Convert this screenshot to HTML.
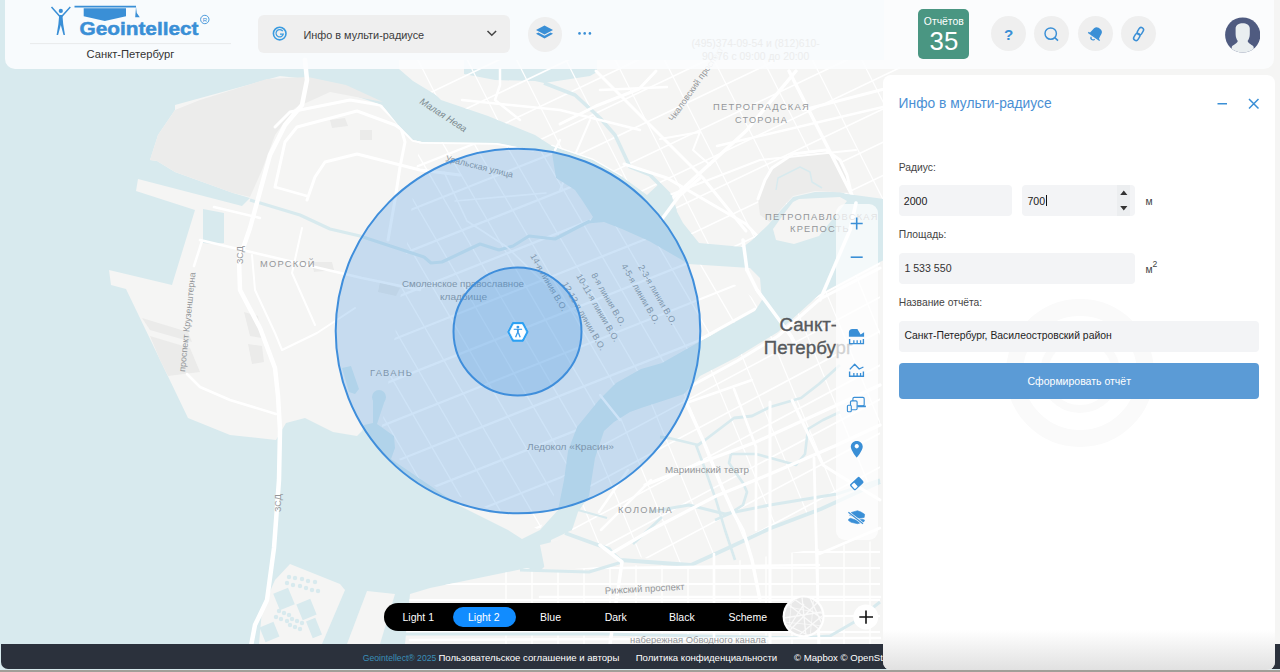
<!DOCTYPE html>
<html><head><meta charset="utf-8">
<style>
html,body{margin:0;padding:0;width:1280px;height:672px;overflow:hidden;background:#9a9a9a;font-family:"Liberation Sans",sans-serif;}
.t{position:absolute;line-height:1;white-space:nowrap;}
#map{position:absolute;left:0;top:0;width:1280px;height:672px;overflow:hidden;}
#header{position:absolute;left:5px;top:-10px;width:1269px;height:79px;border-radius:10px;background:rgba(252,253,254,0.9);}
.rbtn{position:absolute;top:16px;width:35px;height:35px;border-radius:50%;background:#efefef;}
.rbtn svg{position:absolute;left:0;top:0;}
#panel{position:absolute;left:883px;top:75px;width:392px;height:595px;border-radius:8px;background:#fff;overflow:hidden;}
.inp{position:absolute;background:#f3f4f6;border-radius:4px;}
#tools{position:absolute;left:836px;top:204px;width:42px;height:336px;border-radius:9px;background:rgba(255,255,255,0.72);}
#footer{position:absolute;left:1px;top:644px;width:1279px;height:25.3px;background:#2b313c;border-radius:0 0 0 7px;}
#pill{position:absolute;left:384px;top:603px;width:420px;height:28px;border-radius:14px;background:#000;}
.pt{position:absolute;top:611.5px;color:#fff;font-size:10.5px;line-height:1;}
</style></head><body>
<div id="map"><svg width="1280" height="672" viewBox="0 0 1280 672" style="position:absolute;left:0;top:0">
<defs>
<clipPath id="cV"><polygon points="175,105 280,76 307,79 370,101 382,105 399,126 413,140 422,142 497,143 533,150 552,153 556,178 575,190 582,200 593,217 590,221 582,224 604,222 622,229 649,241 682,260 688,264 750,268 760,278 762,300 755,311 699,342 662,363 641,369 616,383 599,400 577,427 568,451 564,480 558,510 540,530 522,539 508,530 460,506 391,459 395,448 394,436 377,424 376,404 373,423 364,425 362,431 357,436 333,432 305,418 286,423 276,440 230,435 188,418 176,393 126,289 111,285 109,270 172,285 195,210 136,191 138,179 242,206 250,198 233,193 175,172 157,161 150,160 158,135 175,110"/></clipPath>
<clipPath id="cVE"><polygon points="420,140 560,150 600,210 700,260 770,310 700,345 560,480 540,530 420,480 380,440 400,300"/></clipPath>
<clipPath id="cVe"><polygon points="175,105 280,76 307,79 370,101 382,105 399,126 413,140 422,142 497,143 533,150 552,153 556,178 575,190 582,200 593,217 590,221 582,224 604,222 622,229 649,241 682,260 688,264 750,268 760,278 762,300 755,311 699,342 662,363 641,369 616,383 599,400 577,427 568,451 564,480 558,510 540,530 522,539 508,530 460,506 391,459 395,448 394,436 377,424 376,404 373,423 364,425 362,431 357,436 333,432 305,418 286,423 276,440 230,435 188,418 176,393 126,289 111,285 109,270 172,285 195,210 136,191 138,179 242,206 250,198 233,193 175,172 157,161 150,160 158,135 175,110"/></clipPath>
<clipPath id="cN"><polygon points="399,60 399,69 413,81 436,95 441,100 488,116 535,135 552,146 593,160 621,176 647,195 660,183 672,196 675,208 683,223 699,243 743,247 751,241 768,225 781,210 793,197 815,192 840,192 847,194 884,199 900,199 900,60"/></clipPath>
<clipPath id="cA"><polygon points="900,252 880,262 820,294 778,332 737,357 700,376 684,394 641,408 630,412 614,422 604,431 595,458 589,496 578,512 572,530 551,540 549,562 539,572 527,568 430,588 410,594 405,644 900,644"/></clipPath>
<clipPath id="cAN"><polygon points="880,262 820,294 778,332 737,357 700,376 684,394 641,408 630,412 614,422 604,431 595,458 589,496 578,512 572,530 612,553 691,565 771,528 880,482"/></clipPath>
<clipPath id="cAS"><polygon points="540,572 620,565 700,566 880,540 880,644 405,644 410,594 430,588 527,568"/></clipPath>
</defs>
<rect width="1280" height="672" fill="#d8eaee"/>
<polygon points="175,105 280,76 307,79 370,101 382,105 399,126 413,140 422,142 497,143 533,150 552,153 556,178 575,190 582,200 593,217 590,221 582,224 604,222 622,229 649,241 682,260 688,264 750,268 760,278 762,300 755,311 699,342 662,363 641,369 616,383 599,400 577,427 568,451 564,480 558,510 540,530 522,539 508,530 460,506 391,459 395,448 394,436 377,424 376,404 373,423 364,425 362,431 357,436 333,432 305,418 286,423 276,440 230,435 188,418 176,393 126,289 111,285 109,270 172,285 195,210 136,191 138,179 242,206 250,198 233,193 175,172 157,161 150,160 158,135 175,110" fill="#f5f5f4"/>
<polygon points="399,60 399,69 413,81 436,95 441,100 488,116 535,135 552,146 593,160 621,176 647,195 660,183 672,196 675,208 683,223 699,243 743,247 751,241 768,225 781,210 793,197 815,192 840,192 847,194 884,199 900,199 900,60" fill="#f5f5f4"/>
<polygon points="900,252 880,262 820,294 778,332 737,357 700,376 684,394 641,408 630,412 614,422 604,431 595,458 589,496 578,512 572,530 551,540 549,562 539,572 527,568 430,588 410,594 405,644 900,644" fill="#f5f5f4"/>
<polygon points="290,564 340,584 345,590 322,644 259,644 262,610 275,580" fill="#f5f5f4"/>
<polygon points="367,591 395,594 380,644 347,644" fill="#f5f5f4"/>
<polygon points="884,0 1280,0 1280,644 884,644" fill="#f5f5f4"/>
<polygon points="540,545 560,540 560,570 545,570" fill="#f4f4f3"/>
<circle cx="289" cy="577" r="2.2" fill="#d8eaee"/>
<circle cx="295" cy="578" r="2.2" fill="#d8eaee"/>
<circle cx="302" cy="579" r="2.2" fill="#d8eaee"/>
<circle cx="308" cy="581" r="2.2" fill="#d8eaee"/>
<circle cx="315" cy="582" r="2.2" fill="#d8eaee"/>
<circle cx="287" cy="583" r="2.2" fill="#d8eaee"/>
<circle cx="293" cy="585" r="2.2" fill="#d8eaee"/>
<circle cx="300" cy="586" r="2.2" fill="#d8eaee"/>
<circle cx="306" cy="588" r="2.2" fill="#d8eaee"/>
<circle cx="312" cy="590" r="2.2" fill="#d8eaee"/>
<circle cx="318" cy="591" r="2.2" fill="#d8eaee"/>
<circle cx="279" cy="611" r="2.2" fill="#d8eaee"/>
<circle cx="284" cy="613" r="2.2" fill="#d8eaee"/>
<circle cx="289" cy="615" r="2.2" fill="#d8eaee"/>
<circle cx="276" cy="617" r="2.2" fill="#d8eaee"/>
<circle cx="281" cy="619" r="2.2" fill="#d8eaee"/>
<circle cx="287" cy="621" r="2.2" fill="#d8eaee"/>
<circle cx="292" cy="619" r="2.2" fill="#d8eaee"/>
<circle cx="297" cy="621" r="2.2" fill="#d8eaee"/>
<circle cx="302" cy="623" r="2.2" fill="#d8eaee"/>
<circle cx="290" cy="625" r="2.2" fill="#d8eaee"/>
<circle cx="295" cy="627" r="2.2" fill="#d8eaee"/>
<circle cx="300" cy="629" r="2.2" fill="#d8eaee"/>
<rect x="276" y="590" width="16" height="18" fill="#d8eaee" transform="rotate(-22 284.0 599.0)"/>
<rect x="299" y="601" width="15" height="17" fill="#d8eaee" transform="rotate(-22 306.5 609.5)"/>
<rect x="262" y="624" width="15" height="16" fill="#d8eaee" transform="rotate(-22 269.5 632.0)"/>
<rect x="309" y="619" width="10" height="18" fill="#d8eaee" transform="rotate(-22 314.0 628.0)"/>
<polygon points="158,135 175,110 200,100 267,79 308,77 346,85 383,102 330,92 295,108 275,135 262,170 250,197 233,193 175,172 157,161 150,160" fill="#ececeb"/>
<polygon points="464,60 597,60 597,72 590,76 544,83 535,81 495,80 464,74" fill="#d8eaee"/>
<polygon points="203,209 224,213 224,243 214,244 203,243" fill="#d8eaee"/>
<circle cx="379" cy="397" r="7" fill="#d8eaee"/>
<polygon points="373,400 385,400 377,424 373,423" fill="#d8eaee"/>
<polygon points="342,368 351,366 359,389 355,394 349,392" fill="#d8eaee"/>
<g clip-path="url(#cV)">
<g clip-path="url(#cVE)" stroke="#ffffff" fill="none" opacity="1">
<line x1="529.0" y1="-137.9" x2="931.1" y2="553.7" stroke-width="1.3"/>
<line x1="505.7" y1="-124.4" x2="907.8" y2="567.2" stroke-width="1.3"/>
<line x1="482.3" y1="-110.8" x2="884.4" y2="580.8" stroke-width="1.3"/>
<line x1="459.0" y1="-97.2" x2="861.1" y2="594.4" stroke-width="1.3"/>
<line x1="435.7" y1="-83.7" x2="837.8" y2="607.9" stroke-width="1.3"/>
<line x1="412.3" y1="-70.1" x2="814.4" y2="621.5" stroke-width="1.3"/>
<line x1="389.0" y1="-56.5" x2="791.1" y2="635.1" stroke-width="1.3"/>
<line x1="365.6" y1="-42.9" x2="767.7" y2="648.7" stroke-width="1.3"/>
<line x1="342.3" y1="-29.4" x2="744.4" y2="662.2" stroke-width="1.3"/>
<line x1="319.0" y1="-15.8" x2="721.0" y2="675.8" stroke-width="1.3"/>
<line x1="295.6" y1="-2.2" x2="697.7" y2="689.4" stroke-width="1.3"/>
<line x1="272.3" y1="11.3" x2="674.4" y2="702.9" stroke-width="1.3"/>
<line x1="248.9" y1="24.9" x2="651.0" y2="716.5" stroke-width="1.3"/>
<line x1="225.6" y1="38.5" x2="627.7" y2="730.1" stroke-width="1.3"/>
<line x1="202.2" y1="52.1" x2="604.3" y2="743.7" stroke-width="1.3"/>
<line x1="178.9" y1="65.6" x2="581.0" y2="757.2" stroke-width="1.3"/>
<line x1="155.6" y1="79.2" x2="557.7" y2="770.8" stroke-width="1.3"/>
<line x1="132.2" y1="92.8" x2="534.3" y2="784.4" stroke-width="1.3"/>
<line x1="108.9" y1="106.3" x2="511.0" y2="797.9" stroke-width="1.3"/>
<line x1="64.1" y1="266.0" x2="807.4" y2="-29.7" stroke-width="2.2"/>
<line x1="78.1" y1="301.3" x2="821.4" y2="5.6" stroke-width="2.2"/>
<line x1="92.1" y1="336.6" x2="835.5" y2="40.9" stroke-width="2.2"/>
<line x1="106.2" y1="371.9" x2="849.5" y2="76.2" stroke-width="2.2"/>
<line x1="120.2" y1="407.3" x2="863.6" y2="111.5" stroke-width="2.2"/>
<line x1="134.3" y1="442.6" x2="877.6" y2="146.8" stroke-width="2.2"/>
<line x1="148.3" y1="477.9" x2="891.7" y2="182.1" stroke-width="2.2"/>
<line x1="162.4" y1="513.2" x2="905.7" y2="217.4" stroke-width="2.2"/>
<line x1="176.4" y1="548.5" x2="919.8" y2="252.7" stroke-width="2.2"/>
<line x1="190.5" y1="583.8" x2="933.8" y2="288.1" stroke-width="2.2"/>
<line x1="204.5" y1="619.1" x2="947.9" y2="323.4" stroke-width="2.2"/>
<line x1="218.6" y1="654.4" x2="961.9" y2="358.7" stroke-width="2.2"/>
<line x1="232.6" y1="689.7" x2="975.9" y2="394.0" stroke-width="2.2"/>
</g>
</g>
<g clip-path="url(#cN)" stroke="#ffffff" fill="none" opacity="1">
<line x1="794.4" y1="-365.9" x2="1155.4" y2="348.0" stroke-width="1.2"/>
<line x1="755.1" y1="-346.1" x2="1116.1" y2="367.8" stroke-width="1.2"/>
<line x1="715.8" y1="-326.2" x2="1076.8" y2="387.7" stroke-width="1.2"/>
<line x1="676.6" y1="-306.4" x2="1037.6" y2="407.6" stroke-width="1.2"/>
<line x1="637.3" y1="-286.5" x2="998.3" y2="427.4" stroke-width="1.2"/>
<line x1="598.0" y1="-266.7" x2="959.0" y2="447.3" stroke-width="1.2"/>
<line x1="558.8" y1="-246.8" x2="919.8" y2="467.1" stroke-width="1.2"/>
<line x1="519.5" y1="-227.0" x2="880.5" y2="487.0" stroke-width="1.2"/>
<line x1="480.2" y1="-207.1" x2="841.2" y2="506.8" stroke-width="1.2"/>
<line x1="441.0" y1="-187.3" x2="802.0" y2="526.7" stroke-width="1.2"/>
<line x1="401.7" y1="-167.4" x2="762.7" y2="546.5" stroke-width="1.2"/>
<line x1="362.4" y1="-147.6" x2="723.4" y2="566.4" stroke-width="1.2"/>
<line x1="323.2" y1="-127.7" x2="684.2" y2="586.2" stroke-width="1.2"/>
<line x1="283.9" y1="-107.8" x2="644.9" y2="606.1" stroke-width="1.2"/>
<line x1="244.6" y1="-88.0" x2="605.6" y2="625.9" stroke-width="1.2"/>
<line x1="274.4" y1="167.1" x2="996.3" y2="-177.8" stroke-width="1.6"/>
<line x1="287.3" y1="194.2" x2="1009.2" y2="-150.7" stroke-width="1.6"/>
<line x1="300.3" y1="221.2" x2="1022.1" y2="-123.6" stroke-width="1.6"/>
<line x1="313.2" y1="248.3" x2="1035.1" y2="-96.6" stroke-width="1.6"/>
<line x1="326.1" y1="275.4" x2="1048.0" y2="-69.5" stroke-width="1.6"/>
<line x1="339.1" y1="302.4" x2="1060.9" y2="-42.4" stroke-width="1.6"/>
<line x1="352.0" y1="329.5" x2="1073.9" y2="-15.4" stroke-width="1.6"/>
<line x1="364.9" y1="356.6" x2="1086.8" y2="11.7" stroke-width="1.6"/>
<line x1="377.9" y1="383.6" x2="1099.7" y2="38.8" stroke-width="1.6"/>
<line x1="390.8" y1="410.7" x2="1112.7" y2="65.8" stroke-width="1.6"/>
<line x1="403.7" y1="437.8" x2="1125.6" y2="92.9" stroke-width="1.6"/>
<line x1="416.7" y1="464.9" x2="1138.5" y2="120.0" stroke-width="1.6"/>
</g>
<polygon points="758,199 765,180 772,168 793,154 826,150 840,160 847,175 850,193 815,191 793,196 781,209 770,222 760,215" fill="#ececeb"/>
<polygon points="142,318 188,332 192,342 150,330" fill="#ebebea"/>
<polygon points="150,336 190,348 200,372 168,376 160,360" fill="#ebebea"/>
<polygon points="244,312 258,316 262,338 250,336" fill="#ebebea"/>
<polygon points="248,344 262,346 264,362 252,364" fill="#ebebea"/>
<polygon points="312,262 332,262 334,270 314,272" fill="#ebebea"/>
<polygon points="330,120 345,118 348,126 332,128" fill="#ebebea"/>
<polygon points="360,130 372,130 372,140 360,140" fill="#ebebea"/>
<polygon points="380,282 400,288 396,296 378,292" fill="#ebebea"/>
<polygon points="793,202 799,199 840,197 847,201 836,215 819,236 794,244 776,240 773,229 783,215" fill="#f5f5f4"/>
<g clip-path="url(#cAN)" stroke="#ffffff" fill="none" opacity="1">
<line x1="838.7" y1="-33.5" x2="1144.1" y2="705.9" stroke-width="1.2"/>
<line x1="807.3" y1="-20.6" x2="1112.7" y2="718.8" stroke-width="1.2"/>
<line x1="775.8" y1="-7.6" x2="1081.3" y2="731.8" stroke-width="1.2"/>
<line x1="744.4" y1="5.4" x2="1049.8" y2="744.8" stroke-width="1.2"/>
<line x1="713.0" y1="18.4" x2="1018.4" y2="757.8" stroke-width="1.2"/>
<line x1="681.6" y1="31.4" x2="987.0" y2="770.8" stroke-width="1.2"/>
<line x1="650.1" y1="44.3" x2="955.6" y2="783.7" stroke-width="1.2"/>
<line x1="618.7" y1="57.3" x2="924.1" y2="796.7" stroke-width="1.2"/>
<line x1="587.3" y1="70.3" x2="892.7" y2="809.7" stroke-width="1.2"/>
<line x1="555.9" y1="83.3" x2="861.3" y2="822.7" stroke-width="1.2"/>
<line x1="524.4" y1="96.3" x2="829.9" y2="835.7" stroke-width="1.2"/>
<line x1="493.0" y1="109.2" x2="798.4" y2="848.6" stroke-width="1.2"/>
<line x1="461.6" y1="122.2" x2="767.0" y2="861.6" stroke-width="1.2"/>
<line x1="430.2" y1="135.2" x2="735.6" y2="874.6" stroke-width="1.2"/>
<line x1="398.7" y1="148.2" x2="704.2" y2="887.6" stroke-width="1.2"/>
<line x1="367.3" y1="161.2" x2="672.7" y2="900.6" stroke-width="1.2"/>
<line x1="335.9" y1="174.1" x2="641.3" y2="913.5" stroke-width="1.2"/>
<line x1="302.4" y1="469.7" x2="1008.0" y2="92.8" stroke-width="1.6"/>
<line x1="316.5" y1="496.1" x2="1022.2" y2="119.2" stroke-width="1.6"/>
<line x1="330.6" y1="522.6" x2="1036.3" y2="145.7" stroke-width="1.6"/>
<line x1="344.8" y1="549.1" x2="1050.4" y2="172.2" stroke-width="1.6"/>
<line x1="358.9" y1="575.5" x2="1064.6" y2="198.6" stroke-width="1.6"/>
<line x1="373.0" y1="602.0" x2="1078.7" y2="225.1" stroke-width="1.6"/>
<line x1="387.2" y1="628.4" x2="1092.8" y2="251.6" stroke-width="1.6"/>
<line x1="401.3" y1="654.9" x2="1107.0" y2="278.0" stroke-width="1.6"/>
<line x1="415.4" y1="681.4" x2="1121.1" y2="304.5" stroke-width="1.6"/>
<line x1="429.6" y1="707.8" x2="1135.2" y2="330.9" stroke-width="1.6"/>
<line x1="443.7" y1="734.3" x2="1149.4" y2="357.4" stroke-width="1.6"/>
<line x1="457.8" y1="760.8" x2="1163.5" y2="383.9" stroke-width="1.6"/>
<line x1="472.0" y1="787.2" x2="1177.6" y2="410.3" stroke-width="1.6"/>
</g>
<g clip-path="url(#cAS)" stroke="#ffffff" fill="none" opacity="1">
<line x1="1026.0" y1="200.0" x2="1026.0" y2="1000.0" stroke-width="1.3"/>
<line x1="1000.0" y1="200.0" x2="1000.0" y2="1000.0" stroke-width="1.3"/>
<line x1="974.0" y1="200.0" x2="974.0" y2="1000.0" stroke-width="1.3"/>
<line x1="948.0" y1="200.0" x2="948.0" y2="1000.0" stroke-width="1.3"/>
<line x1="922.0" y1="200.0" x2="922.0" y2="1000.0" stroke-width="1.3"/>
<line x1="896.0" y1="200.0" x2="896.0" y2="1000.0" stroke-width="1.3"/>
<line x1="870.0" y1="200.0" x2="870.0" y2="1000.0" stroke-width="1.3"/>
<line x1="844.0" y1="200.0" x2="844.0" y2="1000.0" stroke-width="1.3"/>
<line x1="818.0" y1="200.0" x2="818.0" y2="1000.0" stroke-width="1.3"/>
<line x1="792.0" y1="200.0" x2="792.0" y2="1000.0" stroke-width="1.3"/>
<line x1="766.0" y1="200.0" x2="766.0" y2="1000.0" stroke-width="1.3"/>
<line x1="740.0" y1="200.0" x2="740.0" y2="1000.0" stroke-width="1.3"/>
<line x1="714.0" y1="200.0" x2="714.0" y2="1000.0" stroke-width="1.3"/>
<line x1="688.0" y1="200.0" x2="688.0" y2="1000.0" stroke-width="1.3"/>
<line x1="662.0" y1="200.0" x2="662.0" y2="1000.0" stroke-width="1.3"/>
<line x1="636.0" y1="200.0" x2="636.0" y2="1000.0" stroke-width="1.3"/>
<line x1="610.0" y1="200.0" x2="610.0" y2="1000.0" stroke-width="1.3"/>
<line x1="584.0" y1="200.0" x2="584.0" y2="1000.0" stroke-width="1.3"/>
<line x1="558.0" y1="200.0" x2="558.0" y2="1000.0" stroke-width="1.3"/>
<line x1="532.0" y1="200.0" x2="532.0" y2="1000.0" stroke-width="1.3"/>
<line x1="506.0" y1="200.0" x2="506.0" y2="1000.0" stroke-width="1.3"/>
<line x1="314.0" y1="552.0" x2="1114.0" y2="552.0" stroke-width="1.8"/>
<line x1="314.0" y1="568.0" x2="1114.0" y2="568.0" stroke-width="1.8"/>
<line x1="314.0" y1="584.0" x2="1114.0" y2="584.0" stroke-width="1.8"/>
<line x1="314.0" y1="600.0" x2="1114.0" y2="600.0" stroke-width="1.8"/>
<line x1="314.0" y1="616.0" x2="1114.0" y2="616.0" stroke-width="1.8"/>
<line x1="314.0" y1="632.0" x2="1114.0" y2="632.0" stroke-width="1.8"/>
<line x1="314.0" y1="648.0" x2="1114.0" y2="648.0" stroke-width="1.8"/>
<line x1="314.0" y1="664.0" x2="1114.0" y2="664.0" stroke-width="1.8"/>
</g>
<polyline points="250,200 300,215 330,229 360,236 424,257 431,263 442,262 480,244 499,250 513,246 529,236 555,239 578,227 590,221" fill="none" stroke="#d8eaee" stroke-width="3.2" stroke-linejoin="round"/>
<polyline points="544,83 575,95 600,118 615,135 630,167 650,175 670,195 675,210 670,228" fill="none" stroke="#d8eaee" stroke-width="3.5" stroke-linejoin="round"/>
<polyline points="405,634 600,634 800,638 830,636 856,621 880,602" fill="none" stroke="#d8eaee" stroke-width="3" stroke-linejoin="round"/>
<polyline points="660,437 669,438 698,445 705,440 734,418 752,416 770,407 801,398 819,384 840,365" fill="none" stroke="#d8eaee" stroke-width="2.8" stroke-linejoin="round"/>
<polyline points="696,445 705,469 716,500 725,530 735,560" fill="none" stroke="#d8eaee" stroke-width="2.6" stroke-linejoin="round"/>
<polyline points="731,454 756,454 796,465 805,454 808,429 823,420 840,412" fill="none" stroke="#d8eaee" stroke-width="2.6" stroke-linejoin="round"/>
<polyline points="731,454 729,463 743,483 747,492 743,505 729,514 715,520" fill="none" stroke="#d8eaee" stroke-width="2.6" stroke-linejoin="round"/>
<polyline points="649,512 689,505 725,514 770,505 837,494 880,480" fill="none" stroke="#d8eaee" stroke-width="3" stroke-linejoin="round"/>
<polyline points="565,533 609,549 612,553 620,560 691,565 726,549 771,528 821,509 880,482" fill="none" stroke="#d8eaee" stroke-width="3.8" stroke-linejoin="round"/>
<polyline points="520,570 589,572 622,562" fill="none" stroke="#d8eaee" stroke-width="3" stroke-linejoin="round"/>
<polyline points="578,510 607,518" fill="none" stroke="#d8eaee" stroke-width="2.2" stroke-linejoin="round"/>
<polyline points="633,544 662,517" fill="none" stroke="#d8eaee" stroke-width="2.6" stroke-linejoin="round"/>
<polyline points="776,190 778,178 790,172 800,167 810,172 812,182 822,188" fill="none" stroke="#d8eaee" stroke-width="1.5" stroke-linejoin="round"/>
<clipPath id="cLand"><polygon points="175,105 280,76 307,79 370,101 382,105 399,126 413,140 422,142 497,143 533,150 552,153 556,178 575,190 582,200 593,217 590,221 582,224 604,222 622,229 649,241 682,260 688,264 750,268 760,278 762,300 755,311 699,342 662,363 641,369 616,383 599,400 577,427 568,451 564,480 558,510 540,530 522,539 508,530 460,506 391,459 395,448 394,436 377,424 376,404 373,423 364,425 362,431 357,436 333,432 305,418 286,423 276,440 230,435 188,418 176,393 126,289 111,285 109,270 172,285 195,210 136,191 138,179 242,206 250,198 233,193 175,172 157,161 150,160 158,135 175,110"/><polygon points="399,60 399,69 413,81 436,95 441,100 488,116 535,135 552,146 593,160 621,176 647,195 660,183 672,196 675,208 683,223 699,243 743,247 751,241 768,225 781,210 793,197 815,192 840,192 847,194 884,199 900,199 900,60"/><polygon points="900,252 880,262 820,294 778,332 737,357 700,376 684,394 641,408 630,412 614,422 604,431 595,458 589,496 578,512 572,530 551,540 549,562 539,572 527,568 430,588 410,594 405,644 900,644"/><polygon points="793,202 799,199 840,197 847,201 836,215 819,236 794,244 776,240 773,229 783,215"/></clipPath>
<g clip-path="url(#cLand)">
<polyline points="275,127 290,112 350,100 380,105 400,125 405,142 400,167 395,200 388,240" fill="none" stroke="#ffffff" stroke-width="3" stroke-linejoin="round" stroke-linecap="round"/>
<polyline points="275,187 285,142 297,127 357,111 395,125 420,142" fill="none" stroke="#ffffff" stroke-width="3" stroke-linejoin="round" stroke-linecap="round"/>
<polyline points="307,200 315,177 325,162 357,154 420,170 460,175" fill="none" stroke="#ffffff" stroke-width="3" stroke-linejoin="round" stroke-linecap="round"/>
<polyline points="275,187 307,196" fill="none" stroke="#ffffff" stroke-width="2.5" stroke-linejoin="round" stroke-linecap="round"/>
<polyline points="200,240 255,253 362,278 420,290" fill="none" stroke="#ffffff" stroke-width="2.5" stroke-linejoin="round" stroke-linecap="round"/>
<polyline points="202,241 194,266" fill="none" stroke="#ffffff" stroke-width="2.5" stroke-linejoin="round" stroke-linecap="round"/>
<polyline points="187,374 200,387 230,400 276,414" fill="none" stroke="#ffffff" stroke-width="2.5" stroke-linejoin="round" stroke-linecap="round"/>
<polyline points="252,255 255,290 275,333 282,350 317,333 355,308" fill="none" stroke="#ffffff" stroke-width="2" stroke-linejoin="round" stroke-linecap="round"/>
<polyline points="302,228 292,273 315,325" fill="none" stroke="#ffffff" stroke-width="2" stroke-linejoin="round" stroke-linecap="round"/>
<polyline points="214,207 260,218" fill="none" stroke="#ffffff" stroke-width="2.5" stroke-linejoin="round" stroke-linecap="round"/>
<polyline points="399,126 413,140 422,142 497,143 533,150" fill="none" stroke="#ffffff" stroke-width="3.5" stroke-linejoin="round" stroke-linecap="round"/>
<polyline points="444,172 467,221 507,247 592,329" fill="none" stroke="#ffffff" stroke-width="1.6" stroke-linejoin="round" stroke-linecap="round"/>
<polyline points="455,201 546,193" fill="none" stroke="#ffffff" stroke-width="1.6" stroke-linejoin="round" stroke-linecap="round"/>
<polyline points="743,247 747,270 757,290 766,302 791,336 799,352" fill="none" stroke="#ffffff" stroke-width="3.5" stroke-linejoin="round" stroke-linecap="round"/>
<polyline points="699,340 755,309" fill="none" stroke="#ffffff" stroke-width="3" stroke-linejoin="round" stroke-linecap="round"/>
<polyline points="691,386 737,361 778,336 820,299 880,268" fill="none" stroke="#ffffff" stroke-width="3" stroke-linejoin="round" stroke-linecap="round"/>
<polyline points="552,146 593,160 621,176" fill="none" stroke="#ffffff" stroke-width="2.5" stroke-linejoin="round" stroke-linecap="round"/>
<polyline points="789,71 856,203 871,231" fill="none" stroke="#ffffff" stroke-width="3.5" stroke-linejoin="round" stroke-linecap="round"/>
<polyline points="667,203 746,131 796,71" fill="none" stroke="#ffffff" stroke-width="3.5" stroke-linejoin="round" stroke-linecap="round"/>
<polyline points="560,124 596,106 639,89 656,71" fill="none" stroke="#ffffff" stroke-width="3" stroke-linejoin="round" stroke-linecap="round"/>
<polyline points="596,71 703,178 746,231" fill="none" stroke="#ffffff" stroke-width="3" stroke-linejoin="round" stroke-linecap="round"/>
<polyline points="803,110 900,85" fill="none" stroke="#ffffff" stroke-width="3" stroke-linejoin="round" stroke-linecap="round"/>
<polyline points="717,146 900,103" fill="none" stroke="#ffffff" stroke-width="2.5" stroke-linejoin="round" stroke-linecap="round"/>
<polyline points="624,164 667,178 746,224 760,239" fill="none" stroke="#ffffff" stroke-width="3" stroke-linejoin="round" stroke-linecap="round"/>
<polyline points="660,139 700,132 693,150 710,165" fill="none" stroke="#ffffff" stroke-width="2" stroke-linejoin="round" stroke-linecap="round"/>
<polyline points="667,196 760,160 856,150" fill="none" stroke="#ffffff" stroke-width="2" stroke-linejoin="round" stroke-linecap="round"/>
<polyline points="758,199 765,180 772,168 793,154 826,150 840,160 847,175 851,192" fill="none" stroke="#ffffff" stroke-width="3" stroke-linejoin="round" stroke-linecap="round"/>
<polyline points="600,90 667,87" fill="none" stroke="#ffffff" stroke-width="2.5" stroke-linejoin="round" stroke-linecap="round"/>
<polyline points="500,69 500,85 495,100 520,120" fill="none" stroke="#ffffff" stroke-width="2.5" stroke-linejoin="round" stroke-linecap="round"/>
<polyline points="462,100 560,110 640,130" fill="none" stroke="#ffffff" stroke-width="2.5" stroke-linejoin="round" stroke-linecap="round"/>
<polyline points="590,120 560,190" fill="none" stroke="#ffffff" stroke-width="2" stroke-linejoin="round" stroke-linecap="round"/>
<polyline points="685,400 703,440 721,485 734,514 743,530 752,560 760,600" fill="none" stroke="#ffffff" stroke-width="3.5" stroke-linejoin="round" stroke-linecap="round"/>
<polyline points="645,485 700,463 756,442 837,405 880,385" fill="none" stroke="#ffffff" stroke-width="3.2" stroke-linejoin="round" stroke-linecap="round"/>
<polyline points="612,553 651,530 716,496 770,474 837,445 880,425" fill="none" stroke="#ffffff" stroke-width="3.2" stroke-linejoin="round" stroke-linecap="round"/>
<polyline points="599,512 628,470" fill="none" stroke="#ffffff" stroke-width="2.5" stroke-linejoin="round" stroke-linecap="round"/>
<polyline points="600,545 622,562 610,644" fill="none" stroke="#ffffff" stroke-width="3.5" stroke-linejoin="round" stroke-linecap="round"/>
<polyline points="770,402 770,644" fill="none" stroke="#ffffff" stroke-width="3" stroke-linejoin="round" stroke-linecap="round"/>
<polyline points="792,400 823,465 837,474 880,500" fill="none" stroke="#ffffff" stroke-width="3" stroke-linejoin="round" stroke-linecap="round"/>
<polyline points="734,389 756,447 756,530" fill="none" stroke="#ffffff" stroke-width="2.6" stroke-linejoin="round" stroke-linecap="round"/>
<polyline points="689,402 752,380" fill="none" stroke="#ffffff" stroke-width="2.6" stroke-linejoin="round" stroke-linecap="round"/>
<polyline points="814,458 819,644" fill="none" stroke="#ffffff" stroke-width="2.8" stroke-linejoin="round" stroke-linecap="round"/>
<polyline points="714,554 714,644" fill="none" stroke="#ffffff" stroke-width="2.6" stroke-linejoin="round" stroke-linecap="round"/>
<polyline points="601,530 651,480" fill="none" stroke="#ffffff" stroke-width="2.5" stroke-linejoin="round" stroke-linecap="round"/>
<polyline points="620,568 819,565" fill="none" stroke="#ffffff" stroke-width="2.5" stroke-linejoin="round" stroke-linecap="round"/>
<polyline points="540,597 880,597" fill="none" stroke="#ffffff" stroke-width="2.5" stroke-linejoin="round" stroke-linecap="round"/>
<polyline points="819,554 880,528" fill="none" stroke="#ffffff" stroke-width="2.5" stroke-linejoin="round" stroke-linecap="round"/>
<polyline points="410,640 880,638" fill="none" stroke="#ffffff" stroke-width="2.5" stroke-linejoin="round" stroke-linecap="round"/>
</g>
<polyline points="305,60 307,80 302,105 285,125 270,155 250,228 239,260 240,290 260,328 275,368 278,396 280,430 279,480 274,548 267,600 255,625 251,646" fill="none" stroke="#ffffff" stroke-width="4.5" stroke-linejoin="round" stroke-linecap="round"/>
<polyline points="662,219 679,196 700,178" fill="none" stroke="#ffffff" stroke-width="3.5" stroke-linejoin="round" stroke-linecap="round"/>
<polyline points="743,240 747,270" fill="none" stroke="#ffffff" stroke-width="3.5" stroke-linejoin="round" stroke-linecap="round"/>
<polyline points="757,290 766,302 791,336 799,352" fill="none" stroke="#ffffff" stroke-width="3.5" stroke-linejoin="round" stroke-linecap="round"/>
<polyline points="820,300 850,230 856,203" fill="none" stroke="#ffffff" stroke-width="3.5" stroke-linejoin="round" stroke-linecap="round"/>
<polyline points="600,395 620,420" fill="none" stroke="#ffffff" stroke-width="2.5" stroke-linejoin="round" stroke-linecap="round"/>
<polyline points="555,150 560,140" fill="none" stroke="#ffffff" stroke-width="2.5" stroke-linejoin="round" stroke-linecap="round"/>
<g font-family="Liberation Sans, sans-serif">
<text x="419" y="103" font-size="9.5" fill="#7d8a90" letter-spacing="0" text-anchor="start" font-weight="normal" font-style="italic" opacity="1" transform="rotate(33 419 103)">Малая Нева</text>
<text x="445" y="161" font-size="8.8" fill="#94979a" letter-spacing="0" text-anchor="start" font-weight="normal" font-style="normal" opacity="1" transform="rotate(14 445 161)">Уральская улица</text>
<text x="713" y="110" font-size="9.3" fill="#94979a" letter-spacing="1.25" text-anchor="start" font-weight="normal" font-style="normal" opacity="1" textLength="97" lengthAdjust="spacingAndGlyphs">ПЕТРОГРАДСКАЯ</text>
<text x="735" y="122.5" font-size="9.3" fill="#94979a" letter-spacing="1.25" text-anchor="start" font-weight="normal" font-style="normal" opacity="1" textLength="53" lengthAdjust="spacingAndGlyphs">СТОРОНА</text>
<text x="673" y="122" font-size="9" fill="#94979a" letter-spacing="0" text-anchor="start" font-weight="normal" font-style="normal" opacity="1" transform="rotate(-55 673 122)">Чкаловский проспект</text>
<text x="765" y="220" font-size="9.3" fill="#94979a" letter-spacing="1.25" text-anchor="start" font-weight="normal" font-style="normal" opacity="1">ПЕТРОПАВЛОВСКАЯ</text>
<text x="790" y="232" font-size="9.3" fill="#94979a" letter-spacing="1.25" text-anchor="start" font-weight="normal" font-style="normal" opacity="1">КРЕПОСТЬ</text>
<text x="260" y="267" font-size="9.3" fill="#94979a" letter-spacing="1.25" text-anchor="start" font-weight="normal" font-style="normal" opacity="1">МОРСКОЙ</text>
<text x="243" y="264" font-size="9" fill="#94979a" letter-spacing="0" text-anchor="start" font-weight="normal" font-style="normal" opacity="1" transform="rotate(-90 243 264)">ЗСД</text>
<text x="281" y="512" font-size="9" fill="#94979a" letter-spacing="0" text-anchor="start" font-weight="normal" font-style="normal" opacity="1" transform="rotate(-90 281 512)">ЗСД</text>
<text x="185" y="372" font-size="9" fill="#94979a" letter-spacing="0" text-anchor="start" font-weight="normal" font-style="normal" opacity="1" transform="rotate(-84 185 372)">проспект Крузенштерна</text>
<text x="370" y="376" font-size="9.3" fill="#94979a" letter-spacing="1.25" text-anchor="start" font-weight="normal" font-style="normal" opacity="1">ГАВАНЬ</text>
<text x="402" y="287" font-size="9.8" fill="#94979a" letter-spacing="0" text-anchor="start" font-weight="normal" font-style="normal" opacity="1" textLength="122" lengthAdjust="spacingAndGlyphs">Смоленское православное</text>
<text x="440" y="299.5" font-size="9.8" fill="#94979a" letter-spacing="0" text-anchor="start" font-weight="normal" font-style="normal" opacity="1" textLength="47" lengthAdjust="spacingAndGlyphs">кладбище</text>
<text stroke="#56595c" stroke-width="0.35" x="808.3" y="330.6" font-size="18.7" fill="#56595c" letter-spacing="0" text-anchor="middle" font-weight="normal" font-style="normal" opacity="1">Санкт-</text>
<text stroke="#56595c" stroke-width="0.35" x="808.3" y="353.5" font-size="18.7" fill="#56595c" letter-spacing="0" text-anchor="middle" font-weight="normal" font-style="normal" opacity="1">Петербург</text>
<text x="527" y="450" font-size="9.8" fill="#94979a" letter-spacing="0" text-anchor="start" font-weight="normal" font-style="normal" opacity="1" textLength="87" lengthAdjust="spacingAndGlyphs">Ледокол «Красин»</text>
<text x="665" y="473" font-size="9.8" fill="#94979a" letter-spacing="0" text-anchor="start" font-weight="normal" font-style="normal" opacity="1" textLength="84" lengthAdjust="spacingAndGlyphs">Мариинский театр</text>
<text x="618" y="513" font-size="9.3" fill="#94979a" letter-spacing="1.25" text-anchor="start" font-weight="normal" font-style="normal" opacity="1" textLength="55" lengthAdjust="spacingAndGlyphs">КОЛОМНА</text>
<text x="605" y="594" font-size="9.5" fill="#94979a" letter-spacing="0" text-anchor="start" font-weight="normal" font-style="normal" opacity="1" transform="rotate(-3 605 594)">Рижский проспект</text>
<text x="630" y="643" font-size="9.5" fill="#94979a" letter-spacing="0" text-anchor="start" font-weight="normal" font-style="normal" opacity="1" textLength="136" lengthAdjust="spacingAndGlyphs">набережная Обводного канала</text>
<text x="530" y="256" font-size="8.8" fill="#94979a" letter-spacing="0" text-anchor="start" font-weight="normal" font-style="normal" opacity="1" transform="rotate(60 530 256)">14-я линия В.О.</text>
<text x="562" y="284" font-size="8.8" fill="#94979a" letter-spacing="0" text-anchor="start" font-weight="normal" font-style="normal" opacity="1" transform="rotate(60 562 284)">12-13-я линии В.О.</text>
<text x="576" y="276" font-size="8.8" fill="#94979a" letter-spacing="0" text-anchor="start" font-weight="normal" font-style="normal" opacity="1" transform="rotate(60 576 276)">10-11-я линии В.О.</text>
<text x="591" y="275" font-size="8.8" fill="#94979a" letter-spacing="0" text-anchor="start" font-weight="normal" font-style="normal" opacity="1" transform="rotate(60 591 275)">8-я линия В.О.</text>
<text x="621" y="266" font-size="8.8" fill="#94979a" letter-spacing="0" text-anchor="start" font-weight="normal" font-style="normal" opacity="1" transform="rotate(60 621 266)">4-5-я линии В.О.</text>
<text x="638" y="267" font-size="8.8" fill="#94979a" letter-spacing="0" text-anchor="start" font-weight="normal" font-style="normal" opacity="1" transform="rotate(60 638 267)">2-3-я линии В.О.</text>
</g>
<circle cx="518" cy="331" r="182.3" fill="rgba(59,142,222,0.25)" stroke="#3f8edb" stroke-width="2"/>
<circle cx="517.5" cy="331.5" r="64" fill="rgba(59,142,222,0.25)" stroke="#3f8edb" stroke-width="2"/>
<g transform="translate(517.9,331.9)"><polygon points="-10.1,0 -5.3,-9.3 5.3,-9.3 10.1,0 5.3,9.3 -5.3,9.3" fill="#2ba0f3" stroke="#2ba0f3" stroke-width="1" stroke-linejoin="round"/><polygon points="-8,0 -4.2,-7.3 4.2,-7.3 8,0 4.2,7.3 -4.2,7.3" fill="#fff" stroke="#fff" stroke-width="0.8" stroke-linejoin="round"/><circle cx="0" cy="-4.8" r="1.45" fill="#3a9ae8"/><path d="M-4.2,-2.6 L4.2,-2.6" stroke="#3a9ae8" stroke-width="1.1"/><path d="M0,-2.8 L0,1.6" stroke="#3a9ae8" stroke-width="1.9"/><path d="M-0.6,1.2 L-2.3,5.4 M0.6,1.2 L2.3,5.4" stroke="#3a9ae8" stroke-width="1.3" fill="none"/></g>
</svg></div>

<div id="header">
  <!-- logo -->
  <svg style="position:absolute;left:-5px;top:10px" width="240" height="70">
    <g fill="#3a8fd6" stroke="#3a8fd6">
      <circle cx="60.8" cy="10.9" r="2.1" stroke="none"/>
      <path d="M51.5,7 L60.8,17.5 L70.3,7" fill="none" stroke-width="1.5" stroke-linejoin="round"/>
      <path d="M59.2,15 L62.4,15 L63.2,24 L65,35 L63.5,35 L60.8,25 L58.1,35 L56.6,35 L58.4,24 Z" stroke="none"/>
      <path d="M74.5,6.6 L136,6.6" stroke-width="1.6"/>
      <path d="M83.7,8.2 L126,8.2 L126,16.3 L104.8,21 L83.7,16.3 Z" stroke="none"/>
      <path d="M136,7 L136.8,13 L139.8,17.2 L135.2,17.2 Z" stroke="none"/>
    </g>
    <text x="79.5" y="35.2" font-family="Liberation Sans" font-weight="bold" font-size="18.3" fill="#3a8fd6" stroke="#3a8fd6" stroke-width="0.5" textLength="119" lengthAdjust="spacingAndGlyphs">Geointellect</text>
    <circle cx="204.8" cy="19.5" r="4.2" fill="none" stroke="#3a8fd6" stroke-width="0.9"/>
    <text x="204.8" y="21.6" font-family="Liberation Sans" font-size="6" fill="#3a8fd6" text-anchor="middle">R</text>
    <path d="M30,43.6 L231,43.6" stroke="#e8eaec" stroke-width="1"/>
  </svg>
  <div class="t" style="left:81.6px;top:59.1px;font-size:11.2px;color:#333">Санкт-Петербург</div>

  <!-- dropdown -->
  <div style="position:absolute;left:253px;top:24.7px;width:251.5px;height:38.5px;border-radius:6px;background:#efefef"></div>
  <svg style="position:absolute;left:265px;top:36px" width="30" height="30">
    <circle cx="9.7" cy="7.6" r="6.3" fill="none" stroke="#3a9be0" stroke-width="1.6"/>
    <path d="M12.8,5.2 A3.7,3.7 0 1 0 13.3,8.2 L10,8.2" fill="none" stroke="#3a9be0" stroke-width="1.2"/>
  </svg>
  <div class="t" style="left:298.4px;top:39.6px;font-size:10.9px;color:#3c3c3c">Инфо в мульти-радиусе</div>
  <svg style="position:absolute;left:480px;top:38px" width="20" height="14">
    <path d="M2.5,3 L6.8,7.3 L11.1,3" fill="none" stroke="#444" stroke-width="1.5"/>
  </svg>
  <!-- layers btn -->
  <div class="rbtn" style="left:522.5px;top:27px;width:34.5px;height:34.5px;background:#efefef"></div>
  <svg style="position:absolute;left:522px;top:27px" width="35" height="35">
    <path d="M17.5,8.5 L26,13 L17.5,17.5 L9,13 Z" fill="#3a8fd6"/>
    <path d="M11.3,15.5 L17.5,18.8 L23.7,15.5 L26,16.8 L17.5,21.5 L9,16.8 Z" fill="#3a8fd6"/>
  </svg>
  <svg style="position:absolute;left:565.5px;top:38px" width="25" height="10">
    <circle cx="8.5" cy="5.4" r="1.3" fill="#3a8fd6"/><circle cx="13.7" cy="5.4" r="1.3" fill="#3a8fd6"/><circle cx="18.9" cy="5.4" r="1.3" fill="#3a8fd6"/>
  </svg>

  <div class="t" style="left:686.4px;top:49.2px;font-size:10.4px;color:#eceded">(495)374-09-54 и (812)610-</div>
  <div class="t" style="left:697px;top:61.5px;font-size:10.4px;color:#eceded">90-76 с 09:00 до 20:00</div>
  <!-- reports -->
  <div style="position:absolute;left:913.4px;top:18.9px;width:50.5px;height:50px;border-radius:5px;background:#4a9682"></div>
  <div class="t" style="left:918.8px;top:27.2px;font-size:10.4px;color:#fff">Отчётов</div>
  <div class="t" style="left:924.6px;top:39.4px;font-size:25.8px;color:#fff">35</div>

  <!-- round buttons -->
  <div class="rbtn" style="left:985.6px;top:26.3px"></div>
  <div class="rbtn" style="left:1029px;top:26.3px"></div>
  <div class="rbtn" style="left:1072.5px;top:26.3px"></div>
  <div class="rbtn" style="left:1116.2px;top:26.3px"></div>
  <svg style="position:absolute;left:985px;top:26px" width="180" height="36">
    <text x="18.6" y="24.2" font-family="Liberation Sans" font-weight="bold" font-size="15.2" fill="#3a8fd6" text-anchor="middle">?</text>
    <circle cx="65.7" cy="7.6" r="5.7" fill="none" stroke="#3a8fd6" stroke-width="1.45" transform="translate(-5,10)"/>
    <path d="M64.8,21.6 L68,24.6" stroke="#3a8fd6" stroke-width="1.5"/>
    <g transform="translate(106.4,17) rotate(35)">
      <path d="M-6,4 C-5,3 -5,-1 -4.5,-3 C-3.5,-6.5 3.5,-6.5 4.5,-3 C5,-1 5,3 6,4 Z" fill="#3a8fd6"/>
      <path d="M-7,4.2 L7,4.2" stroke="#3a8fd6" stroke-width="1.4"/>
      <path d="M-2,6 A2,2 0 0 0 2,6" fill="none" stroke="#3a8fd6" stroke-width="1.2"/>
    </g>
    <g transform="translate(148.6,18) rotate(-58)" fill="none" stroke="#3a8fd6" stroke-width="1.5">
      <rect x="-7.2" y="-2.4" width="7.6" height="4.8" rx="2.4"/>
      <rect x="-0.4" y="-2.4" width="7.6" height="4.8" rx="2.4"/>
    </g>
  </svg>
  <!-- avatar -->
  <svg style="position:absolute;left:1215px;top:26.7px" width="40" height="40">
    <defs><clipPath id="av"><circle cx="22.7" cy="18" r="17.6"/></clipPath></defs>
    <circle cx="22.7" cy="18" r="17.6" fill="#4f5b80"/>
    <g clip-path="url(#av)" fill="#e9eef0">
      <path d="M15.6,11.5 C15.6,4.6 29.8,4.6 29.8,11.5 L29.8,17 C29.8,20 28.8,22.5 27.6,24 C28.5,26.8 32,27.6 33.5,29.5 L35,40 L10.4,40 L11.9,29.5 C13.4,27.6 16.9,26.8 17.8,24 C16.6,22.5 15.6,20 15.6,17 Z"/>
    </g>
  </svg>
</div>

<div id="tools">
  <svg width="42" height="336" style="position:absolute;left:0;top:0">
    <g stroke="#3a8fd6" stroke-width="1.6" fill="none">
      <path d="M14.7,19.5 L26.7,19.5 M20.7,13.5 L20.7,25.5"/>
      <path d="M14.7,53.2 L26.7,53.2"/>
    </g>
    <g fill="#3a8fd6">
      <!-- icon1 -->
      <path d="M12.9,132.7 L12.9,128.6 Q12.9,125.1 16.4,125.1 L21.4,125.1 L24.6,130.4 L28.1,128.3 L28.1,132.7 Z"/>
      <path d="M12.9,135 L14.3,135 L14.3,138.9 L17.2,138.9 L17.2,136.3 L18.5,136.3 L18.5,138.9 L20.5,138.9 L20.5,136.3 L21.8,136.3 L21.8,138.9 L23.9,138.9 L23.9,136.3 L25.2,136.3 L25.2,138.9 L26.7,138.9 L26.7,135 L28.1,135 L28.1,140.3 L12.9,140.3 Z"/>
      <!-- icon2 -->
      <path d="M13.8,165.4 L18.7,160.2 L23.2,165 L27.4,163" fill="none" stroke="#3a8fd6" stroke-width="1.35" stroke-linejoin="round"/>
      <path d="M12.9,167.6 L14.3,167.6 L14.3,171.5 L17.2,171.5 L17.2,168.9 L18.5,168.9 L18.5,171.5 L20.5,171.5 L20.5,168.9 L21.8,168.9 L21.8,171.5 L23.9,171.5 L23.9,168.9 L25.2,168.9 L25.2,171.5 L26.7,171.5 L26.7,167.6 L28.1,167.6 L28.1,172.9 L12.9,172.9 Z"/>
      <!-- icon3 devices -->
      <rect x="16.9" y="193.4" width="11.3" height="8.5" rx="1.3" fill="none" stroke="#3a8fd6" stroke-width="1.15"/>
      <rect x="21.5" y="201.6" width="8.4" height="1.6" rx="0.5"/>
      <rect x="14.5" y="196.9" width="6.6" height="8.9" rx="1.2" fill="#f9fafb" stroke="#3a8fd6" stroke-width="1.15"/>
      <rect x="11.4" y="201.3" width="3.9" height="6.4" rx="1" fill="#f9fafb" stroke="#3a8fd6" stroke-width="1.1"/>
      <!-- pin -->
      <path d="M20.75,237 C17.3,237 14.8,239.6 14.8,242.8 C14.8,246.6 20.75,253.7 20.75,253.7 C20.75,253.7 26.75,246.6 26.75,242.8 C26.75,239.6 24.2,237 20.75,237 Z M20.75,240.1 A2.15,2.15 0 1 0 20.76,240.1 Z" fill-rule="evenodd"/>
      <!-- eraser -->
      <g transform="translate(20.75,279.6) rotate(-43)">
        <rect x="-6.4" y="-4" width="12.8" height="8" rx="1.6"/>
        <rect x="-5.1" y="-2.5" width="3.9" height="5.3" rx="0.6" fill="#fff"/>
      </g>
      <!-- layers crossed -->
      <path d="M15.2,308.5 L21.5,306.7 Q25,307.6 28.6,310.3 L28.2,313.4 L23.3,314.3 L13.6,311.2 Z" stroke="#3a8fd6" stroke-width="0.6" stroke-linejoin="round"/>
      <path d="M12.6,315.3 L14.4,314.3 L21.5,316.5 L26,315.2 L28.6,316.1 L27.7,317.9 L21.5,319.7 L15.2,318.3 L12.6,316.6 Z" stroke="#3a8fd6" stroke-width="0.6" stroke-linejoin="round"/>
      <path d="M12.4,308.3 L27,319.8" stroke="#f9fafb" stroke-width="2.6"/>
      <path d="M12.4,308.3 L27,319.8" stroke="#3a8fd6" stroke-width="1.1"/>
    </g>
  </svg>
</div>

<div style="position:absolute;left:0;top:669.5px;width:1280px;height:3px;background:#a19e98"></div>
<div id="footer">
  <svg style="position:absolute;left:361px;top:0" width="80" height="26"><text x="0.8" y="17.3" font-family="Liberation Sans" font-size="9.6" fill="#3a8fb8" textLength="73.5" lengthAdjust="spacingAndGlyphs">Geointellect® 2025</text></svg>
  <div class="t" style="left:437.4px;top:8.5px;font-size:9.6px;color:#fff">Пользовательское соглашение и авторы</div>
  <div class="t" style="left:634.7px;top:8.5px;font-size:9.6px;color:#fff">Политика конфиденциальности</div>
  <div class="t" style="left:793px;top:8.5px;font-size:9.6px;color:#fff">© Mapbox © OpenStreetMap</div>
</div>

<div id="pill"></div>
<div style="position:absolute;left:453px;top:606.6px;width:63px;height:20.6px;border-radius:10.3px;background:#118cff"></div>
<div class="pt" style="left:402.5px">Light 1</div>
<div class="pt" style="left:468px">Light 2</div>
<div class="pt" style="left:540px">Blue</div>
<div class="pt" style="left:604.7px">Dark</div>
<div class="pt" style="left:669px">Black</div>
<div class="pt" style="left:728.5px">Scheme</div>
<!-- thumbnail -->
<svg style="position:absolute;left:780px;top:594px" width="50" height="46">
  <defs><clipPath id="thc"><circle cx="23.6" cy="22.4" r="18.8"/></clipPath></defs>
  <circle cx="23.6" cy="22.4" r="21" fill="#fff"/>
  <circle cx="23.6" cy="22.4" r="18.8" fill="#e9e9e9"/>
  <g clip-path="url(#thc)" stroke="#fafafa" fill="none">
    <path d="M8,10 L40,36 M4,24 L42,18 M10,36 L38,8 M22,3 L26,42 M5,30 L30,42 M14,5 L44,26 M2,16 L20,2 M30,4 L42,30 M6,38 L24,10 M18,42 L42,22" stroke-width="1.3"/>
    <path d="M4,12 L44,20 M4,28 L44,32 M12,2 L8,44 M34,2 L30,44" stroke-width="0.7"/>
  </g>
</svg>
<!-- plus -->
<svg style="position:absolute;left:850px;top:602px" width="32" height="32">
  <circle cx="15.8" cy="15" r="12.5" fill="#fff"/>
  <path d="M9.3,15 L23,15 M16,8.5 L16,21.8" stroke="#111" stroke-width="1.6"/>
</svg>

<div id="panel">
  <div style="position:absolute;left:122.6px;top:224px;width:148px;height:148px;border-radius:50%;border:17px solid #fafafa;box-sizing:border-box"></div>
  <div style="position:absolute;left:156.6px;top:258px;width:80px;height:80px;border-radius:50%;border:8.6px solid #fafafa;box-sizing:border-box"></div>
    <div class="t" style="left:15.6px;top:22.2px;font-size:13.8px;color:#4a8fd4">Инфо в мульти-радиусе</div>
  <svg style="position:absolute;left:330px;top:20px" width="60" height="20">
    <path d="M4.5,8.8 L14,8.8" stroke="#3a8fd6" stroke-width="1.4"/>
    <path d="M36,4 L45.5,13.5 M45.5,4 L36,13.5" stroke="#3a8fd6" stroke-width="1.5"/>
  </svg>
  <div class="t" style="left:15.8px;top:87.6px;font-size:10.3px;color:#444">Радиус:</div>
  <div class="inp" style="left:15.8px;top:110px;width:113px;height:31px"></div>
  <div class="t" style="left:20.8px;top:120.6px;font-size:10.6px;color:#222">2000</div>
  <div class="inp" style="left:139.2px;top:110px;width:113px;height:31px"></div>
  <div style="position:absolute;left:233.9px;top:110px;width:13.5px;height:31px;background:#eceef0"></div>
  <svg style="position:absolute;left:233.9px;top:110px" width="14" height="31">
    <path d="M3.2,10 L6.8,5.5 L10.4,10 Z M3.2,21 L6.8,25.5 L10.4,21 Z" fill="#333"/>
  </svg>
  <div class="t" style="left:144.4px;top:120.6px;font-size:10.6px;color:#222">700</div>
  <div style="position:absolute;left:162.5px;top:119.5px;width:1px;height:11px;background:#111"></div>
  <div class="t" style="left:262.6px;top:121.5px;font-size:10.3px;color:#444">м</div>
  <div class="t" style="left:15.8px;top:154.5px;font-size:10.3px;color:#444">Площадь:</div>
  <div class="inp" style="left:15.8px;top:178px;width:236.5px;height:30.7px"></div>
  <div class="t" style="left:21.4px;top:188.2px;font-size:10.6px;color:#333">1 533 550</div>
  <div class="t" style="left:262.6px;top:189.5px;font-size:10.3px;color:#444">м</div>
  <div class="t" style="left:269.6px;top:184.5px;font-size:8.6px;color:#444">2</div>
  <div class="t" style="left:15.8px;top:223.2px;font-size:10.3px;color:#444">Название отчёта:</div>
  <div class="inp" style="left:15.8px;top:245.6px;width:360.3px;height:31.3px"></div>
  <div class="t" style="left:21.4px;top:256.2px;font-size:10.4px;color:#1e1e1e">Санкт-Петербург, Василеостровский район</div>
  <div style="position:absolute;left:15.8px;top:287.5px;width:360.3px;height:36.3px;border-radius:4px;background:#5b9bd6"></div>
  <div class="t" style="left:144.5px;top:300.6px;font-size:10.5px;color:#fff">Сформировать отчёт</div>
  <div style="position:absolute;left:0;top:555px;width:392px;height:40px;background:linear-gradient(to bottom,rgba(232,232,232,0),rgba(225,225,225,1))"></div>
</div>
</body></html>
